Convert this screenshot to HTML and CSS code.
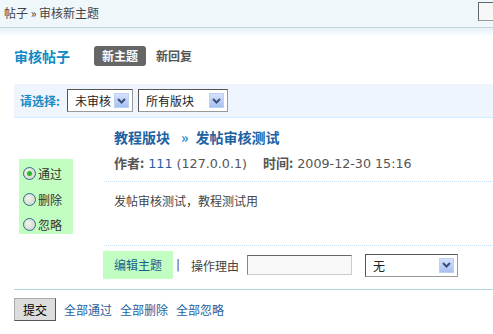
FILE: index.html
```html
<!DOCTYPE html>
<html>
<head>
<meta charset="utf-8">
<link rel="stylesheet" href="styles.css">
</head>
<body>
<div class="topbar">
  <span class="crumb">帖子 &raquo; 审核新主题</span>
  <span class="search"></span>
</div>
<div class="shade"></div>
<div class="main">
  <div class="head">
    <h1 class="title">审核帖子</h1>
    <span class="tab current">新主题</span>
    <span class="tab">新回复</span>
  </div>
  <div class="filter">
    <span class="label">请选择:</span>
    <span class="sel w1"><span class="val">未审核</span><span class="arrow"><svg width="9" height="6" viewBox="0 0 9 6"><path d="M1 1 L4.5 4.5 L8 1" fill="none" stroke="#3a4f7a" stroke-width="2"/></svg></span></span>
    <span class="sel w2"><span class="val">所有版块</span><span class="arrow"><svg width="9" height="6" viewBox="0 0 9 6"><path d="M1 1 L4.5 4.5 L8 1" fill="none" stroke="#3a4f7a" stroke-width="2"/></svg></span></span>
  </div>
  <div class="post">
    <div class="side">
      <div class="choices">
        <div class="choice"><span class="radio on"></span>通过</div>
        <div class="choice"><span class="radio"></span>删除</div>
        <div class="choice"><span class="radio"></span>忽略</div>
      </div>
    </div>
    <div class="body">
      <div class="info">
        <h2 class="ptitle">教程版块<span class="sep">&raquo;</span>发帖审核测试</h2>
        <p class="meta"><b>作者:</b> <a class="link">111</a> (127.0.0.1) <b class="time">时间:</b> 2009-12-30 15:16</p>
      </div>
      <p class="text">发帖审核测试，教程测试用</p>
      <div class="ops">
        <span class="edit">编辑主题</span>
        <span class="bar">|</span>
        <span class="reason">操作理由</span>
        <span class="input"></span>
        <span class="sel w3"><span class="val">无</span><span class="arrow"><svg width="9" height="6" viewBox="0 0 9 6"><path d="M1 1 L4.5 4.5 L8 1" fill="none" stroke="#3a4f7a" stroke-width="2"/></svg></span></span>
      </div>
    </div>
  </div>
  <div class="foot">
    <span class="btn">提交</span>
    <a class="link">全部通过</a>
    <a class="link">全部删除</a>
    <a class="link">全部忽略</a>
  </div>
</div>
</body>
</html>
```
FILE: styles.css
```css
html, body { margin: 0; padding: 0; background: #fff; }
body {
  font-family: "DejaVu Sans", "Noto Sans CJK SC", sans-serif;
  font-size: 12px;
  color: #444;
  width: 493px;
  overflow: hidden;
}
.topbar {
  background: #f0f7fb;
  border-bottom: 1px solid #c3d3d9;
  display: flex;
  align-items: center;
  justify-content: space-between;
  box-sizing: border-box;
  height: 28px;
}
.crumb { margin-left: 4px; margin-top: -2px; color: #444; font-family: "Noto Sans CJK SC", sans-serif; }
.search {
  width: 20px; height: 19px; box-sizing: border-box;
  border: 1px solid #999; border-top-color: #666; border-left-color: #666;
  background: #f7f7f7; margin-right: -5px; margin-top: -4px;
}
.shade { height: 9px; background: linear-gradient(#e6f1f8, #fff); }
.main { padding-left: 14px; }
.head { display: flex; align-items: center; height: 22px; margin-top: 8px; }
.title {
  margin: 0; font-size: 14px; font-weight: bold; color: #0f8ac4;
  font-family: "Noto Sans CJK SC", sans-serif; width: 80px;
}
.tab {
  font-family: "Noto Sans CJK SC", sans-serif; font-weight: bold; color: #555;
  padding: 0 8px; height: 20px; line-height: 20px; border-radius: 3px;
}
.tab.current { background: #666; color: #fff; margin-right: 2px; }
.filter {
  margin-top: 17px; height: 33px; background: #eef5fc;
  border-bottom: 1px dotted #c5def2; display: flex; align-items: center;
  padding-left: 6px;
}
.label { color: #1a8ac2; font-weight: bold; font-family: "Noto Sans CJK SC", sans-serif; width: 47px; font-size: 12px; }
.sel {
  display: inline-flex; align-items: center; justify-content: space-between;
  box-sizing: border-box; height: 23px; background: #fff;
  border: 1px solid #999; border-top-color: #555; border-left-color: #555;
  padding: 0 3px 0 7px; font-family: "Noto Sans CJK SC", sans-serif; color: #222;
  margin-right: 5px;
}
.w1 { width: 66px; }
.w2 { width: 90px; }
.w3 { width: 93px; }
.arrow {
  width: 15px; height: 15px; display: inline-flex; align-items: center; justify-content: center;
  background: linear-gradient(#d4e2fb, #a8c0f2); border: 1px solid #bcd0f4; box-sizing: border-box;
}
.post { display: flex; }
.side { width: 90px; flex: none; }
.choices {
  margin-left: 5px; margin-top: 41px; width: 54px; height: 75px; background: #c2fec2;
  box-sizing: border-box; padding-top: 2px; padding-left: 4px;
}
.choice {
  display: flex; align-items: center; height: 25.5px; font-family: "Noto Sans CJK SC", sans-serif; color: #333;
}
.radio {
  width: 11px; height: 11px; border-radius: 50%; border: 1px solid #2f6a8e;
  background: radial-gradient(circle at 40% 40%, #f4f4ec, #c8d0c0);
  margin-right: 2px; position: relative;
}
.radio.on::after {
  content: ""; position: absolute; left: 3px; top: 3px; width: 5px; height: 5px; border-radius: 50%;
  background: #2bb52b;
}
.body { flex: 1; }
.info { border-bottom: 1px dotted #c5def2; padding-left: 10px; }
.ptitle {
  margin: 0; padding-top: 9px; font-size: 14px; font-weight: bold; color: #1c61a2;
  font-family: "Noto Sans CJK SC", sans-serif; line-height: 20px;
}
.sep { color: #1e8ad0; margin: 0 7px 0 11px; }
.meta { margin: 0; padding: 6px 0 7px; line-height: 20px; color: #555; font-size: 12.7px; }
.meta b { font-family: "Noto Sans CJK SC", sans-serif; color: #555; font-size: 13px; }
.time { margin-left: 12px; }
.link { color: #1c61a2; text-decoration: none; }
.text {
  margin: 0; padding: 9px 10px 0; height: 54px; border-bottom: 1px dotted #c5def2;
  font-family: "Noto Sans CJK SC", sans-serif; color: #444; line-height: 20px;
}
.ops {
  display: flex; align-items: center; height: 28px; margin-top: 5px;
  border-bottom: 1px solid #b4d4dc; margin-left: -90px; padding-left: 89px; padding-bottom: 10px;
}
.edit {
  background: #c2fec2; color: #17628a; height: 28px; line-height: 28px; padding: 0 11px;
  font-family: "Noto Sans CJK SC", sans-serif;
}
.bar { margin: 0 11px 0 3px; color: #555; }
.reason { font-family: "Noto Sans CJK SC", sans-serif; color: #444; width: 56px; }
.input {
  width: 105px; height: 20px; box-sizing: border-box; background: #f9f9f9;
  border: 1px solid #ccc; border-top-color: #666; border-left-color: #888; margin-right: 13px;
}
.foot { display: flex; align-items: center; margin-top: 8px; gap: 8px; }
.btn {
  width: 42px; height: 23px; box-sizing: border-box; background: #ddd;
  border: 1px solid #aaa; border-right-color: #555; border-bottom-color: #555;
  display: inline-flex; align-items: center; justify-content: center; color: #000;
  font-family: "Noto Sans CJK SC", sans-serif;
}
.foot .link { font-family: "Noto Sans CJK SC", sans-serif; }
```
